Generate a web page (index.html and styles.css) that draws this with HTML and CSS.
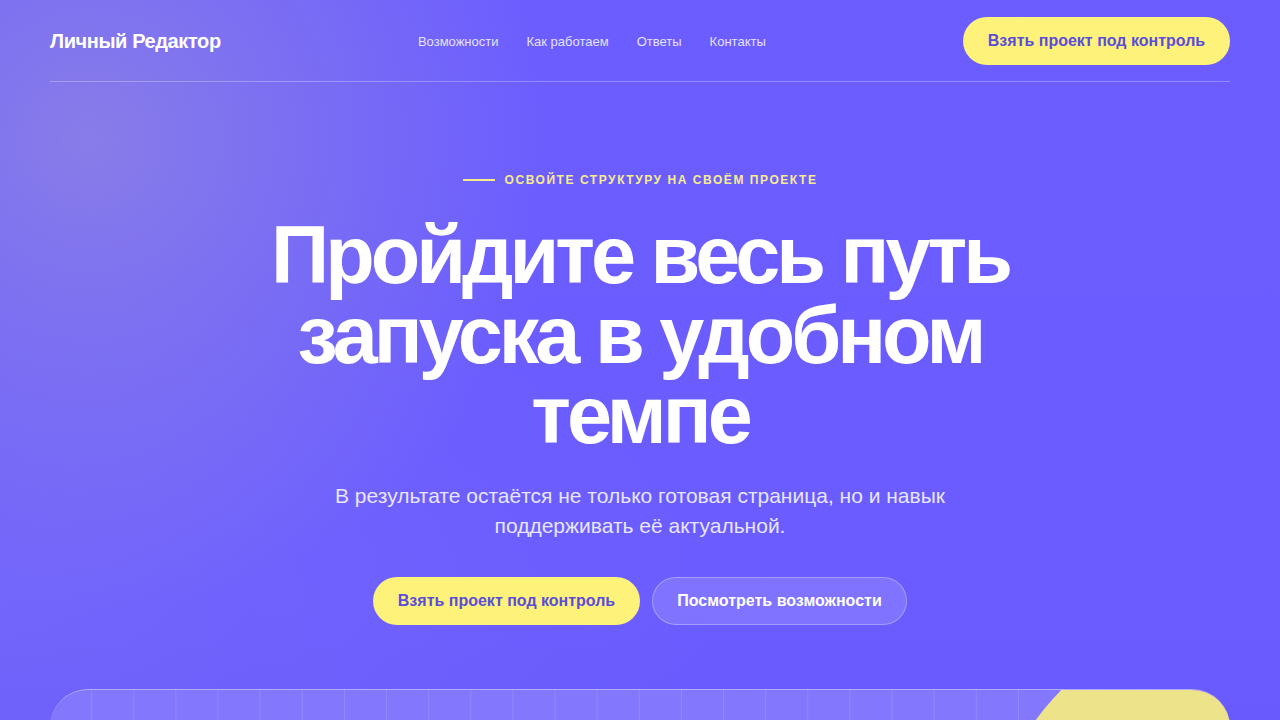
FILE: index.html
```html
<!DOCTYPE html>
<html lang="ru">
<head>
<meta charset="utf-8">
<title>Личный Редактор</title>
<link rel="stylesheet" href="styles.css">
</head>
<body>
<div class="page">
  <header class="header">
    <div class="logo">Личный Редактор</div>
    <nav class="nav">
      <a href="#">Возможности</a>
      <a href="#">Как работаем</a>
      <a href="#">Ответы</a>
      <a href="#">Контакты</a>
    </nav>
    <a class="btn btn-yellow" href="#">Взять проект под контроль</a>
  </header>
  <main class="hero">
    <div class="eyebrow"><span class="eyebrow-line"></span>Освойте структуру на своём проекте</div>
    <h1 class="title">Пройдите весь путь запуска в удобном темпе</h1>
    <p class="lead">В результате остаётся не только готовая страница, но и навык поддерживать её актуальной.</p>
    <div class="actions">
      <a class="btn btn-yellow" href="#">Взять проект под контроль</a>
      <a class="btn btn-ghost" href="#">Посмотреть возможности</a>
    </div>
  </main>
  <section class="preview">
    <div class="blob"></div>
  </section>
</div>
</body>
</html>
```
FILE: styles.css
```css
* { box-sizing: border-box; }
html, body { margin: 0; padding: 0; }
body {
  font-family: "Liberation Sans", Arial, sans-serif;
  color: #fff;
  min-height: 720px;
  overflow: hidden;
  background:
    radial-gradient(circle at 7% 14%, rgba(160, 150, 215, 0.55) 0, rgba(160, 150, 215, 0) 32%),
    radial-gradient(ellipse at 0% 60%, rgba(140, 130, 240, 0.25) 0, rgba(140, 130, 240, 0) 40%),
    linear-gradient(180deg, #6b5dff 0%, #6a5cff 60%, #6457f5 100%);
}
a { text-decoration: none; color: inherit; }
.page { padding: 0 50px; }

.header {
  display: flex;
  align-items: center;
  justify-content: space-between;
  padding: 17px 0 16px;
  border-bottom: 1px solid rgba(255, 255, 255, 0.28);
}
.logo {
  font-size: 20px;
  font-weight: 700;
  letter-spacing: -0.4px;
  color: #fff;
}
.nav { display: flex; gap: 28px; }
.nav a { font-size: 13px; color: #e4e1ff; }

.btn {
  display: inline-flex;
  align-items: center;
  justify-content: center;
  height: 48px;
  padding: 0 20px;
  border-radius: 24px;
  font-size: 16px;
  font-weight: 700;
  white-space: nowrap;
}
.btn-yellow {
  background: #fff27a;
  color: #5a4ed8;
  width: 267px;
}
.btn-ghost {
  background: rgba(255, 255, 255, 0.14);
  border: 1px solid rgba(255, 255, 255, 0.3);
  color: #fff;
  width: 255px;
}

.hero {
  display: flex;
  flex-direction: column;
  align-items: center;
  text-align: center;
  padding-top: 90px;
}
.eyebrow {
  display: flex;
  align-items: center;
  gap: 10px;
  font-size: 12px;
  line-height: 16px;
  font-weight: 700;
  letter-spacing: 1.55px;
  text-transform: uppercase;
  color: #f7ec8c;
}
.eyebrow-line {
  width: 32px;
  height: 2px;
  background: #f7ec8c;
}
.title {
  margin: 27px 0 0;
  max-width: 790px;
  font-size: 81px;
  line-height: 80px;
  font-weight: 700;
  letter-spacing: -4px;
  color: #fff;
}
.lead {
  margin: 26px 0 0;
  max-width: 680px;
  font-size: 21px;
  line-height: 30px;
  color: #e8e5ff;
}
.actions {
  display: flex;
  gap: 12px;
  margin-top: 36px;
}

.preview {
  position: relative;
  margin-top: 64px;
  height: 320px;
  border-radius: 38px 38px 0 0;
  border-top: 1px solid rgba(255, 255, 255, 0.38);
  background-color: #8377fd;
  background-image: linear-gradient(90deg, rgba(255, 255, 255, 0) 41px, rgba(255, 255, 255, 0.12) 41px, rgba(255, 255, 255, 0.12) 42px);
  background-size: 42.14px 100%;
  overflow: hidden;
}
.blob {
  position: absolute;
  left: 936px;
  top: -77px;
  width: 520px;
  height: 520px;
  border-radius: 50%;
  background: #ede38a;
}
```
